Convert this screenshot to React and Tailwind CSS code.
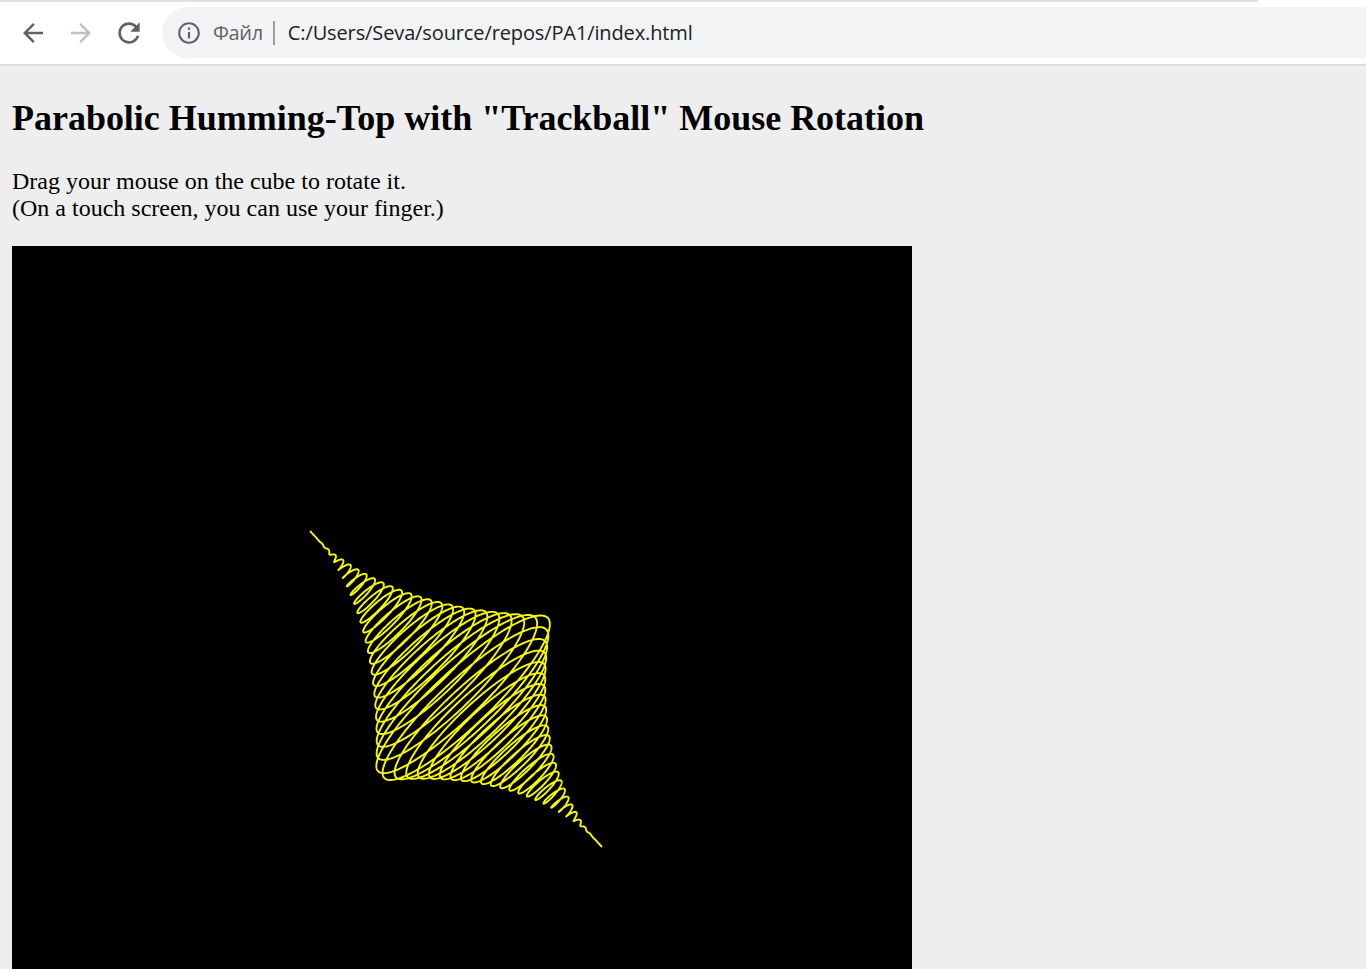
// Spiral wound on a double-parabola top, projected onto the canvas
const buildTopPath = () => {
  const cx = 456, cy = 689;
  const axis = [146, 158];
  const major = [85, -80];
  const minor = [18, 20];
  const bulge = [7, 9];
  const turns = 50;
  const steps = 9000;
  const pts = [];
  for (let i = 0; i <= steps; i++) {
    const h = -1 + (2 * i) / steps;
    const edge = 1 - Math.abs(h);
    // the last stretch to each tip runs straight
    const r = edge ** 2 * Math.min(1, edge / 0.2);
    const a = Math.PI * turns * h;
    const c = Math.cos(a) * r;
    const s = Math.sin(a) * r;
    const base = edge ** 2;
    const x = cx + axis[0] * h + bulge[0] * base + major[0] * c + minor[0] * s;
    const y = cy + axis[1] * h + bulge[1] * base + major[1] * c + minor[1] * s;
    pts.push(`${x.toFixed(2)} ${y.toFixed(2)}`);
  }
  return "M" + pts.join("L");
};

const BackIcon = () => (
  <svg width="30" height="30" viewBox="0 0 24 24" className="fill-[#5f6368]">
    <path d="M20 11H7.83l5.59-5.59L12 4l-8 8 8 8 1.41-1.41L7.83 13H20v-2z" />
  </svg>
);

const ForwardIcon = () => (
  <svg width="30" height="30" viewBox="0 0 24 24" className="fill-[#bdc1c6]">
    <path d="M12 4l-1.41 1.41L16.17 11H4v2h12.17l-5.58 5.59L12 20l8-8z" />
  </svg>
);

const ReloadIcon = () => (
  <svg width="32" height="32" viewBox="0 0 24 24" className="fill-[#5f6368] -ml-px">
    <path d="M17.65 6.35C16.2 4.9 14.21 4 12 4c-4.42 0-7.99 3.58-7.99 8s3.57 8 7.99 8c3.73 0 6.84-2.55 7.73-6h-2.08c-.82 2.33-3.04 4-5.65 4-3.31 0-6-2.69-6-6s2.69-6 6-6c1.66 0 3.14.69 4.22 1.78L13 11h7V4l-2.35 2.35z" />
  </svg>
);

const InfoIcon = () => (
  <svg width="26" height="26" viewBox="0 0 24 24" className="fill-[#5f6368]">
    <path d="M11 7h2v2h-2zm0 4h2v6h-2zm1-9C6.48 2 2 6.48 2 12s4.48 10 10 10 10-4.48 10-10S17.52 2 12 2zm0 18c-4.41 0-8-3.59-8-8s3.59-8 8-8 8 3.59 8 8-3.59 8-8 8z" />
  </svg>
);

const Toolbar = () => (
  <div className="bg-white">
    <div className="h-[2px] w-[1258px] bg-[#dee1e6]" />
    <div className="flex h-[64px] items-start pt-[5px] border-b-2 border-[#dadce0]">
      <div className="flex w-[162px] h-[51px] items-center pl-[18px] gap-[18px]">
        <BackIcon />
        <ForwardIcon />
        <ReloadIcon />
      </div>
      <div className="flex flex-1 h-[51px] items-center rounded-l-[26px] bg-[#f1f3f4] pl-[14px] font-['Open_Sans',sans-serif] text-[20px] tracking-[-0.12px]">
        <InfoIcon />
        <span className="ml-[11px] text-[#5f6368] tracking-[-0.35px]">Файл</span>
        <span className="ml-[10px] mr-[13px] h-[24px] w-[2px] bg-[#9aa0a6]" />
        <span className="text-[#202124]">C:/Users/Seva/source/repos/PA1/index.html</span>
      </div>
    </div>
  </div>
);

export default function App() {
  return (
    <div className="h-[969px] overflow-hidden bg-[#eeeeee] text-black font-['Liberation_Serif',serif]">
      <Toolbar />
      <div className="px-3">
        <h2 className="mt-[31px] mb-[29px] text-[36px] leading-[42px] font-bold tracking-[-0.02px]">
          Parabolic Humming-Top with "Trackball" Mouse Rotation
        </h2>
        <p className="text-[24px] leading-[27px] mb-[24px]">
          Drag your mouse on the cube to rotate it.
          <br />
          (On a touch screen, you can use your finger.)
        </p>
        <svg width="900" height="900" viewBox="12 246 900 900" className="block bg-black">
          <path d={buildTopPath()} fill="none" stroke="#f8f800" strokeWidth="1.9" strokeLinejoin="round" className="blur-[0.35px]" />
        </svg>
      </div>
    </div>
  );
}
